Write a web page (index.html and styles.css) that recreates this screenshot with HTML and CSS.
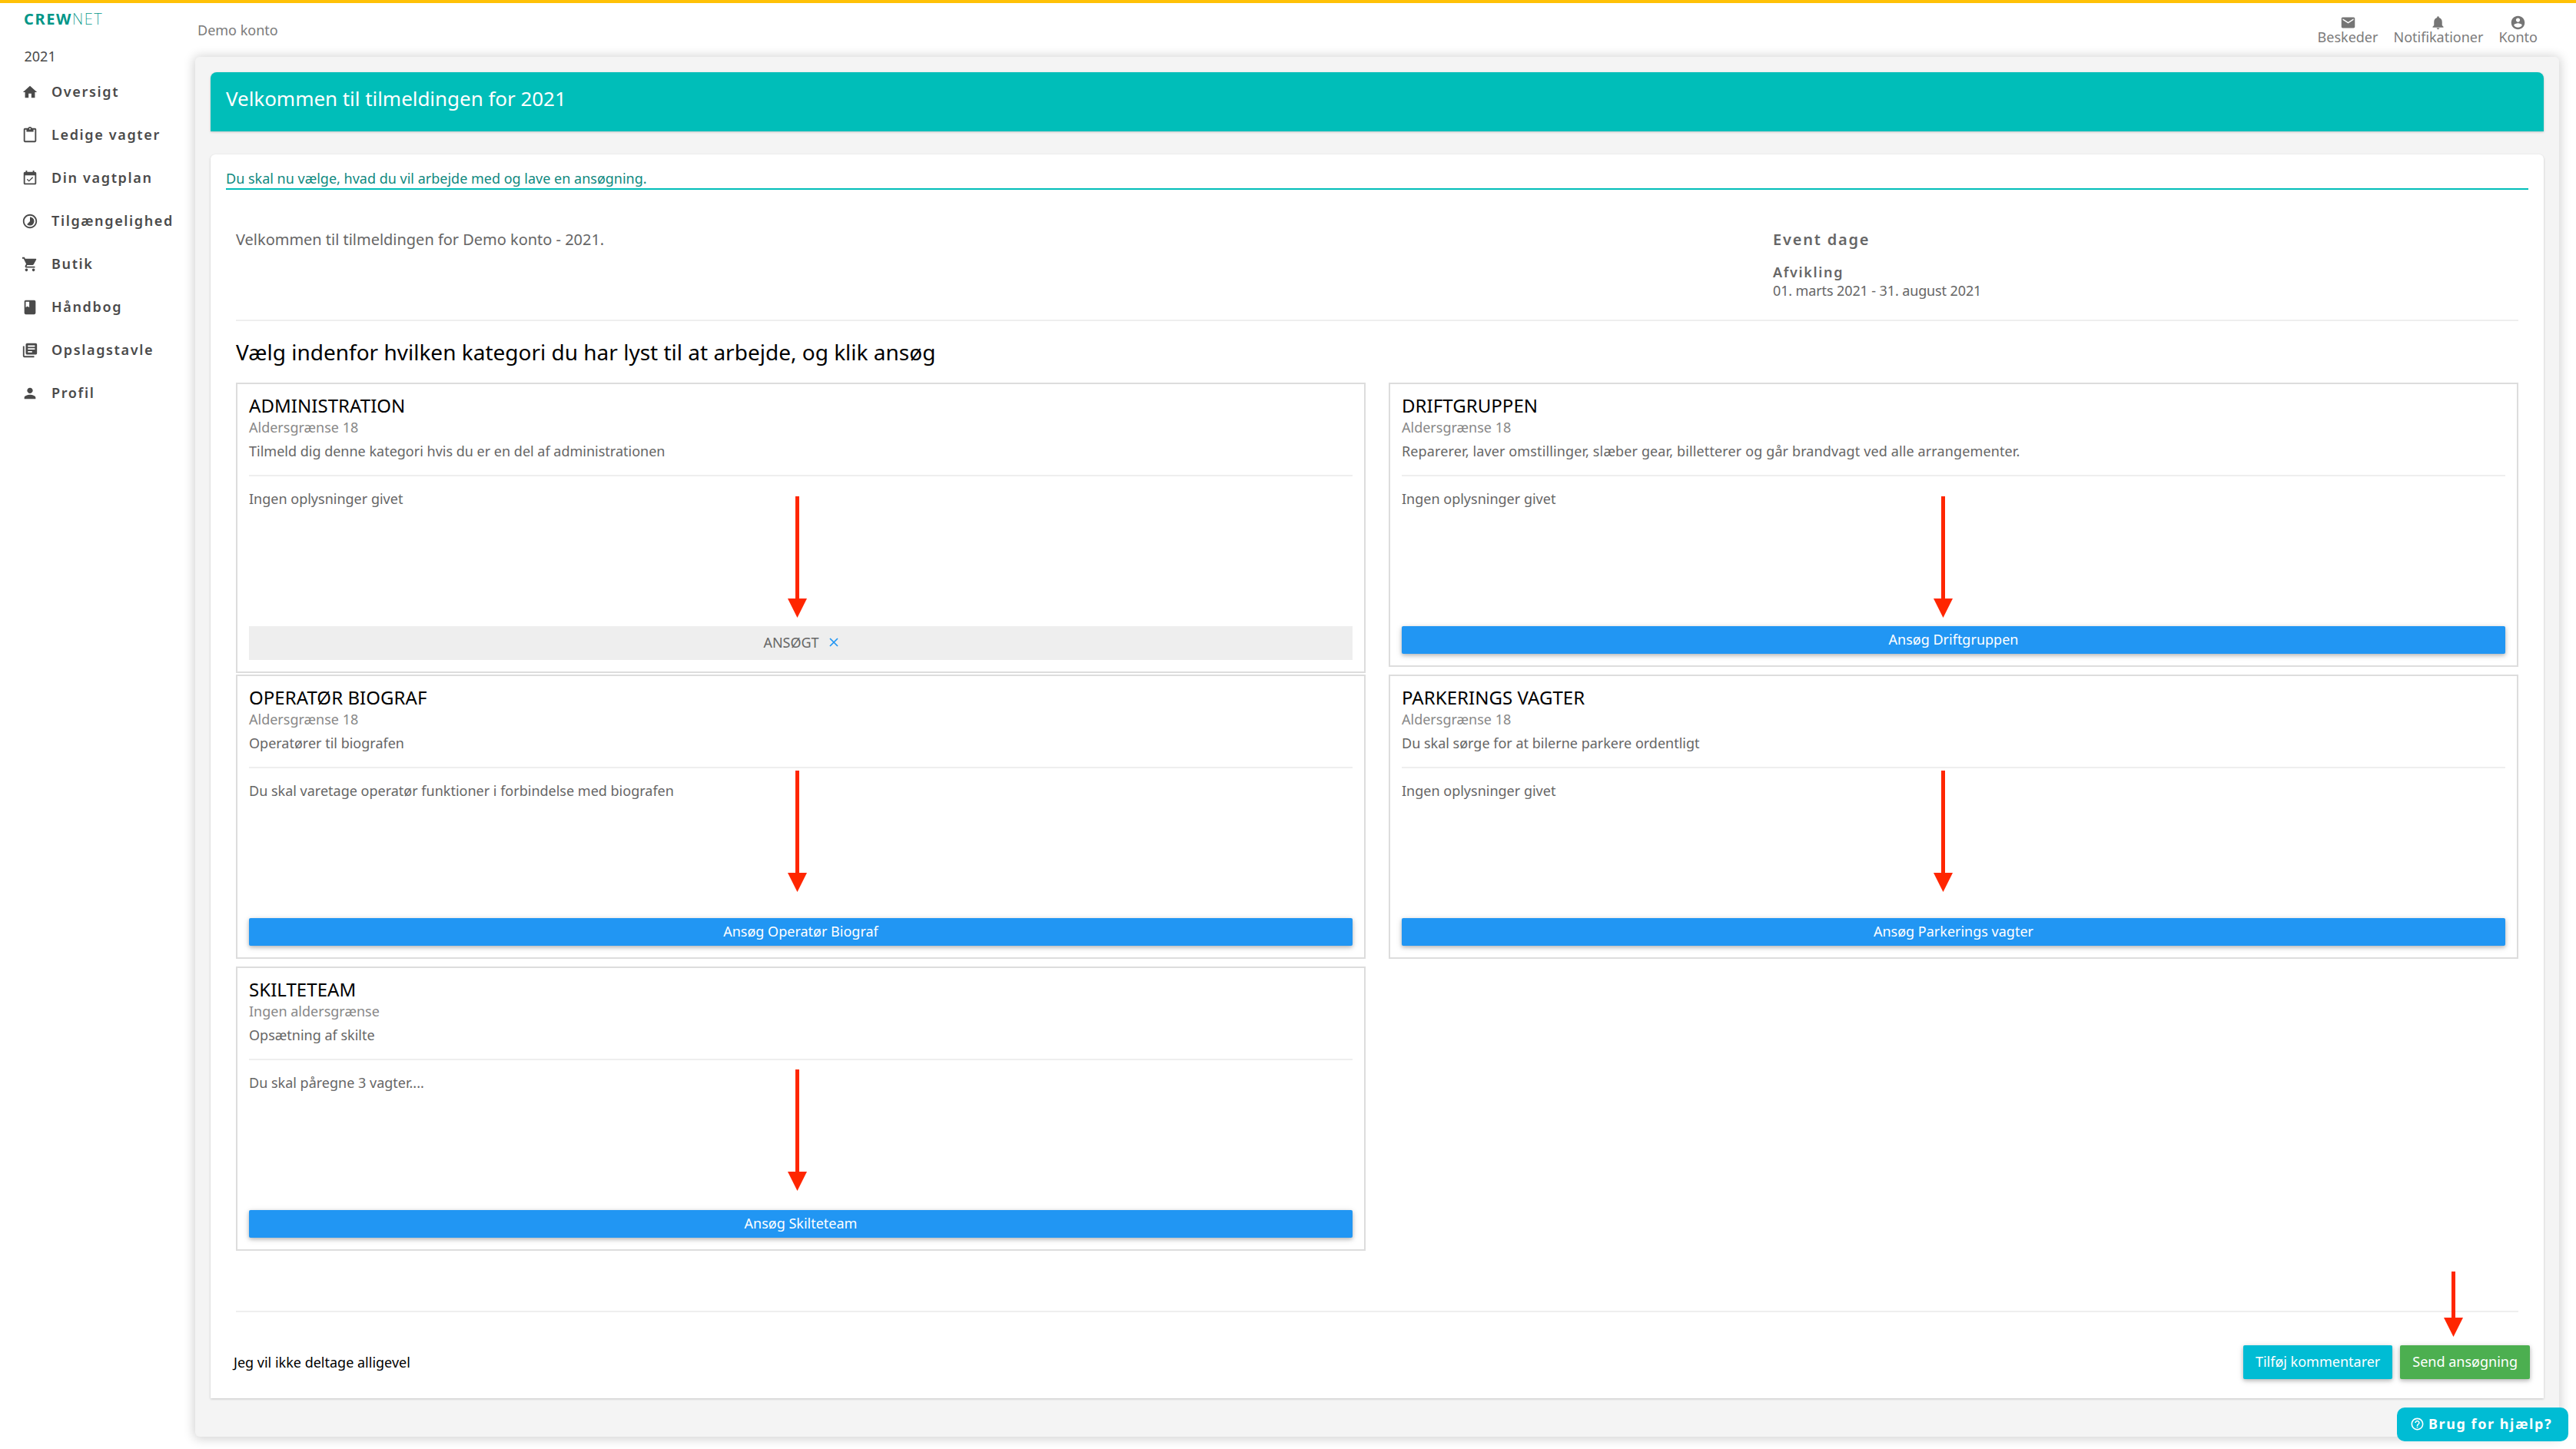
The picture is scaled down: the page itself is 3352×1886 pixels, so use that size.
FILE: index.html
```html
<!DOCTYPE html>
<html lang="da">
<head>
<meta charset="utf-8">
<title>CrewNet</title>
<link rel="stylesheet" href="styles.css">
</head>
<body>
<div class="layout">
  <aside class="sidebar">
    <div class="logo"><b>CREW</b><span>NET</span></div>
    <div class="year">2021</div>
    <nav class="nav">
      <a class="nav-item"><svg class="icon" viewBox="0 0 24 24"><path d="M10 20v-6h4v6h5v-8h3L12 3 2 12h3v8z"/></svg>Oversigt</a>
      <a class="nav-item"><svg class="icon" viewBox="0 0 24 24"><path d="M19 2h-4.18C14.4.84 13.3 0 12 0c-1.3 0-2.4.84-2.82 2H5c-1.1 0-2 .9-2 2v16c0 1.1.9 2 2 2h14c1.1 0 2-.9 2-2V4c0-1.1-.9-2-2-2zm-7 0c.55 0 1 .45 1 1s-.45 1-1 1-1-.45-1-1 .45-1 1-1zm7 18H5V4h2v3h10V4h2v16z"/></svg>Ledige vagter</a>
      <a class="nav-item"><svg class="icon" viewBox="0 0 24 24"><path d="M16.53 11.06L15.47 10l-4.88 4.88-2.12-2.12-1.06 1.06L10.59 17l5.94-5.94zM19 3h-1V1h-2v2H8V1H6v2H5c-1.11 0-1.99.9-1.99 2L3 19c0 1.1.89 2 2 2h14c1.1 0 2-.9 2-2V5c0-1.1-.9-2-2-2zm0 16H5V8h14v11z"/></svg>Din vagtplan</a>
      <a class="nav-item"><svg class="icon" viewBox="0 0 24 24"><path d="M16.24 7.76C15.07 6.59 13.54 6 12 6v6l-4.24 4.24c2.34 2.34 6.14 2.34 8.49 0 2.34-2.34 2.34-6.14-.01-8.48zM12 2C6.48 2 2 6.48 2 12s4.48 10 10 10 10-4.48 10-10S17.52 2 12 2zm0 18c-4.42 0-8-3.58-8-8s3.58-8 8-8 8 3.58 8 8-3.58 8-8 8z"/></svg>Tilgængelighed</a>
      <a class="nav-item"><svg class="icon" viewBox="0 0 24 24"><path d="M7 18c-1.1 0-1.99.9-1.99 2S5.9 22 7 22s2-.9 2-2-.9-2-2-2zM1 2v2h2l3.6 7.59-1.35 2.45c-.16.28-.25.61-.25.96 0 1.1.9 2 2 2h12v-2H7.42c-.14 0-.25-.11-.25-.25l.03-.12.9-1.63h7.45c.75 0 1.41-.41 1.75-1.03l3.58-6.49c.08-.14.12-.31.12-.48 0-.55-.45-1-1-1H5.21l-.94-2H1zm16 16c-1.1 0-1.99.9-1.99 2s.89 2 1.99 2 2-.9 2-2-.9-2-2-2z"/></svg>Butik</a>
      <a class="nav-item"><svg class="icon" viewBox="0 0 24 24"><path d="M18 2H6c-1.1 0-2 .9-2 2v16c0 1.1.9 2 2 2h12c1.1 0 2-.9 2-2V4c0-1.1-.9-2-2-2zM6 4h5v8l-2.5-1.5L6 12V4z"/></svg>Håndbog</a>
      <a class="nav-item"><svg class="icon" viewBox="0 0 24 24"><path d="M4 6H2v14c0 1.1.9 2 2 2h14v-2H4V6zm16-4H8c-1.1 0-2 .9-2 2v12c0 1.1.9 2 2 2h12c1.1 0 2-.9 2-2V4c0-1.1-.9-2-2-2zm-1 9H9V9h10v2zm-4 4H9v-2h6v2zm4-8H9V5h10v2z"/></svg>Opslagstavle</a>
      <a class="nav-item"><svg class="icon" viewBox="0 0 24 24"><path d="M12 12c2.21 0 4-1.79 4-4s-1.79-4-4-4-4 1.79-4 4 1.79 4 4 4zm0 2c-2.67 0-8 1.34-8 4v2h16v-2c0-2.66-5.33-4-8-4z"/></svg>Profil</a>
    </nav>
  </aside>

  <div class="content">
    <header class="topbar">
      <div class="account-name">Demo konto</div>
      <div class="top-actions">
        <a class="top-action"><svg viewBox="0 0 24 24"><path d="M20 4H4c-1.1 0-1.99.9-1.99 2L2 18c0 1.1.9 2 2 2h16c1.1 0 2-.9 2-2V6c0-1.1-.9-2-2-2zm0 4l-8 5-8-5V6l8 5 8-5v2z"/></svg>Beskeder</a>
        <a class="top-action"><svg viewBox="0 0 24 24"><path d="M12 22c1.1 0 2-.9 2-2h-4c0 1.1.89 2 2 2zm6-6v-5c0-3.07-1.64-5.64-4.5-6.32V4c0-.83-.67-1.5-1.5-1.5s-1.5.67-1.5 1.5v.68C7.63 5.36 6 7.92 6 11v5l-2 2v1h16v-1l-2-2z"/></svg>Notifikationer</a>
        <a class="top-action"><svg viewBox="0 0 24 24"><path d="M12 2C6.48 2 2 6.48 2 12s4.48 10 10 10 10-4.48 10-10S17.52 2 12 2zm0 3c1.66 0 3 1.34 3 3s-1.34 3-3 3-3-1.34-3-3 1.34-3 3-3zm0 14.2c-2.5 0-4.71-1.28-6-3.22.03-1.99 4-3.08 6-3.08 1.99 0 5.97 1.09 6 3.08-1.29 1.94-3.5 3.22-6 3.22z"/></svg>Konto</a>
      </div>
    </header>

    <main class="panel">
      <h1 class="page-title">Velkommen til tilmeldingen for 2021</h1>
      <section class="sheet">
        <p class="tagline">Du skal nu vælge, hvad du vil arbejde med og lave en ansøgning.</p>
        <div class="inner">
          <div class="intro">
            <p class="welcome">Velkommen til tilmeldingen for Demo konto - 2021.</p>
            <div class="event">
              <h3>Event dage</h3>
              <h4>Afvikling</h4>
              <p>01. marts 2021 - 31. august 2021</p>
            </div>
          </div>
          <h2 class="heading">Vælg indenfor hvilken kategori du har lyst til at arbejde, og klik ansøg</h2>
          <div class="cards">
            <article class="card">
              <h3>ADMINISTRATION</h3>
              <p class="age">Aldersgrænse 18</p>
              <p class="desc">Tilmeld dig denne kategori hvis du er en del af administrationen</p>
              <p class="info">Ingen oplysninger givet</p>
              <div class="applied">ANSØGT<svg viewBox="0 0 12 12"><path d="M1 1l10 10M11 1L1 11"/></svg></div>
            </article>
            <article class="card">
              <h3>DRIFTGRUPPEN</h3>
              <p class="age">Aldersgrænse 18</p>
              <p class="desc desc-long">Reparerer, laver omstillinger, slæber gear, billetterer og går brandvagt ved alle arrangementer.</p>
              <p class="info">Ingen oplysninger givet</p>
              <a class="apply">Ansøg Driftgruppen</a>
            </article>
            <article class="card">
              <h3>OPERATØR BIOGRAF</h3>
              <p class="age">Aldersgrænse 18</p>
              <p class="desc">Operatører til biografen</p>
              <p class="info">Du skal varetage operatør funktioner i forbindelse med biografen</p>
              <a class="apply">Ansøg Operatør Biograf</a>
            </article>
            <article class="card">
              <h3>PARKERINGS VAGTER</h3>
              <p class="age">Aldersgrænse 18</p>
              <p class="desc">Du skal sørge for at bilerne parkere ordentligt</p>
              <p class="info">Ingen oplysninger givet</p>
              <a class="apply">Ansøg Parkerings vagter</a>
            </article>
            <article class="card">
              <h3>SKILTETEAM</h3>
              <p class="age">Ingen aldersgrænse</p>
              <p class="desc">Opsætning af skilte</p>
              <p class="info">Du skal påregne 3 vagter....</p>
              <a class="apply">Ansøg Skilteteam</a>
            </article>
          </div>
        </div>
        <footer class="actions">
          <a class="decline">Jeg vil ikke deltage alligevel</a>
          <a class="button button-comment">Tilføj kommentarer</a>
          <a class="button button-send">Send ansøgning</a>
        </footer>
      </section>
    </main>
  </div>
</div>

<svg class="arrow arrow-1" viewBox="0 0 25 158"><path d="M10 0h5v133h10L12.500 158 0 133h10z"/></svg>
<svg class="arrow arrow-2" viewBox="0 0 25 158"><path d="M10 0h5v133h10L12.500 158 0 133h10z"/></svg>
<svg class="arrow arrow-3" viewBox="0 0 25 158"><path d="M10 0h5v133h10L12.500 158 0 133h10z"/></svg>
<svg class="arrow arrow-4" viewBox="0 0 25 158"><path d="M10 0h5v133h10L12.500 158 0 133h10z"/></svg>
<svg class="arrow arrow-5" viewBox="0 0 25 158"><path d="M10 0h5v133h10L12.500 158 0 133h10z"/></svg>
<svg class="arrow arrow-short" viewBox="0 0 25 85"><path d="M10 0h5v60h10L12.500 85 0 60h10z"/></svg>

<a class="help"><svg viewBox="0 0 24 24"><path d="M11 18h2v-2h-2v2zm1-16C6.480 2 2 6.480 2 12s4.480 10 10 10 10-4.480 10-10S17.520 2 12 2zm0 18c-4.410 0-8-3.590-8-8s3.590-8 8-8 8 3.590 8 8-3.590 8-8 8zm0-14c-2.210 0-4 1.790-4 4h2c0-1.100.9-2 2-2s2 .9 2 2c0 2-3 1.750-3 5h2c0-2.250 3-2.500 3-5 0-2.210-1.790-4-4-4z"/></svg>Brug for hjælp?</a>
</body>
</html>
```
FILE: styles.css
```css
* {
  box-sizing: border-box;
  margin: 0;
  padding: 0;
}

body {
  position: relative;
  height: 1886px;
  border-top: 4px solid #ffc107;
  background: #fff;
  color: #666;
  font: 400 18px/24px "Noto Sans", sans-serif;
  overflow: hidden;
}

.layout {
  display: flex;
}

/* Sidebar */
.sidebar {
  width: 254px;
  padding: 7px 0 0 28px;
  color: #4a4a4a;
}

.logo {
  padding-left: 3px;
  color: #009688;
  font-size: 20px;
  line-height: 28px;
  white-space: nowrap;
}

.logo b {
  font-weight: 700;
  letter-spacing: 1.6px;
}

.logo span {
  font-weight: 200;
  letter-spacing: 1.6px;
}

.year {
  margin: 21px 0 5px 3.5px;
  line-height: 26px;
}

.nav {
  display: flex;
  flex-direction: column;
}

.nav-item {
  display: flex;
  align-items: center;
  gap: 17px;
  height: 56px;
  font-weight: 600;
  letter-spacing: 1.65px;
  white-space: nowrap;
}

.icon {
  position: relative;
  top: 1px;
  width: 22px;
  height: 22px;
  fill: currentColor;
}

/* Top bar */
.content {
  flex: 1;
  min-width: 0;
  padding-right: 22px;
}

.topbar {
  display: flex;
  justify-content: space-between;
  height: 70px;
  padding: 15px 28px 0 3px;
  color: #7b7b7b;
}

.account-name {
  margin-top: 7px;
  line-height: 26px;
}

.top-actions {
  display: flex;
  gap: 20px;
}

.top-action {
  display: flex;
  flex-direction: column;
  align-items: center;
  line-height: 16px;
}

.top-action svg {
  width: 21px;
  height: 21px;
  fill: #757575;
}

/* Panel */
.panel {
  height: 1796px;
  padding: 20px;
  border-radius: 6px;
  background: #f4f4f4;
  box-shadow: 0 1px 14px 2px rgba(0, 0, 0, .18);
}

.page-title {
  height: 77px;
  padding: 16px 20px 0;
  border-radius: 8px 8px 0 0;
  background: #00beb9;
  box-shadow: 0 1px 3px rgba(0, 0, 0, .2);
  color: #fff;
  font-size: 26px;
  font-weight: 400;
  line-height: 36px;
  letter-spacing: -.04px;
}

.sheet {
  height: 1619px;
  margin-top: 30px;
  padding: 18px 20px 0;
  border-radius: 6px 6px 0 0;
  background: #fff;
  box-shadow: 0 1px 3px rgba(0, 0, 0, .2);
}

.tagline {
  border-bottom: 2px solid #00beb9;
  color: #10897f;
  line-height: 26px;
}

.inner {
  margin: 50px 13px 0;
  padding-bottom: 78px;
  border-bottom: 2px solid #eee;
}

.intro {
  display: grid;
  grid-template-columns: 2000px 1fr;
  padding-bottom: 26px;
  border-bottom: 2px solid #eee;
}

.welcome {
  font-size: 20px;
  line-height: 30px;
  letter-spacing: -.02px;
}

.event h3 {
  margin-bottom: 15px;
  font-size: 20px;
  font-weight: 600;
  line-height: 30px;
  letter-spacing: 1.8px;
}

.event h4 {
  font-size: 18px;
  font-weight: 600;
  letter-spacing: 1.65px;
}

.event p {
  letter-spacing: -.12px;
}

.heading {
  margin: 20px 0;
  color: #000;
  font-size: 28px;
  font-weight: 400;
  line-height: 40px;
}

/* Category cards */
.cards {
  display: grid;
  grid-template-columns: 1fr 1fr;
  grid-template-rows: repeat(3, 370px);
  align-items: start;
  gap: 10px 30px;
}

.card {
  padding: 13px 15px 15px;
  border: 2px solid #ddd;
}

.card h3 {
  color: #000;
  font-size: 24px;
  font-weight: 400;
  line-height: 30px;
  letter-spacing: .05px;
}

.age {
  margin-top: 1px;
  color: #888;
}

.desc {
  margin-top: 7px;
  padding-bottom: 19px;
  border-bottom: 2px solid #eee;
}

.desc-long {
  letter-spacing: .125px;
}

.info {
  height: 195px;
  padding-top: 17px;
}

.apply,
.applied {
  display: flex;
  align-items: center;
  justify-content: center;
  padding-bottom: 2px;
}

.apply {
  height: 36px;
  border-radius: 2px;
  background: #2196f3;
  box-shadow: 0 2px 5px rgba(0, 0, 0, .22), 0 2px 10px rgba(0, 0, 0, .12);
  color: #fff;
}

.applied {
  gap: 13px;
  height: 44px;
  background: #eee;
}

.applied svg {
  width: 12px;
  height: 12px;
  fill: none;
  stroke: #2196f3;
  stroke-width: 1.7;
}

/* Footer */
.actions {
  display: flex;
  gap: 10px;
  margin: 43px -2px 0 10px;
}

.decline {
  margin-right: auto;
  color: #000;
  line-height: 44px;
}

.button {
  height: 44px;
  padding: 0 16px;
  border-radius: 2px;
  box-shadow: 0 2px 5px rgba(0, 0, 0, .22), 0 2px 10px rgba(0, 0, 0, .12);
  color: #fff;
  line-height: 42px;
}

.button-comment {
  background: #00bcd4;
}

.button-send {
  background: #4caf50;
}

/* Floating elements */
.help {
  position: absolute;
  right: 10px;
  bottom: 10px;
  display: flex;
  align-items: center;
  gap: 5px;
  width: 223px;
  height: 44px;
  padding: 0 0 2px 17px;
  border-radius: 10px;
  background: #00bcd4;
  color: #fff;
  font-weight: 700;
  letter-spacing: 1.57px;
  white-space: nowrap;
}

.help svg {
  width: 19px;
  height: 19px;
  fill: #fff;
}

.arrow {
  position: absolute;
  width: 25px;
  height: 158px;
  fill: #ff2600;
}

.arrow-1 { left: 1025px; top: 642px; }
.arrow-2 { left: 2516px; top: 642px; }
.arrow-3 { left: 1025px; top: 999px; }
.arrow-4 { left: 2516px; top: 999px; }
.arrow-5 { left: 1025px; top: 1388px; }
.arrow-short { left: 3180px; top: 1651px; height: 85px; }
```
